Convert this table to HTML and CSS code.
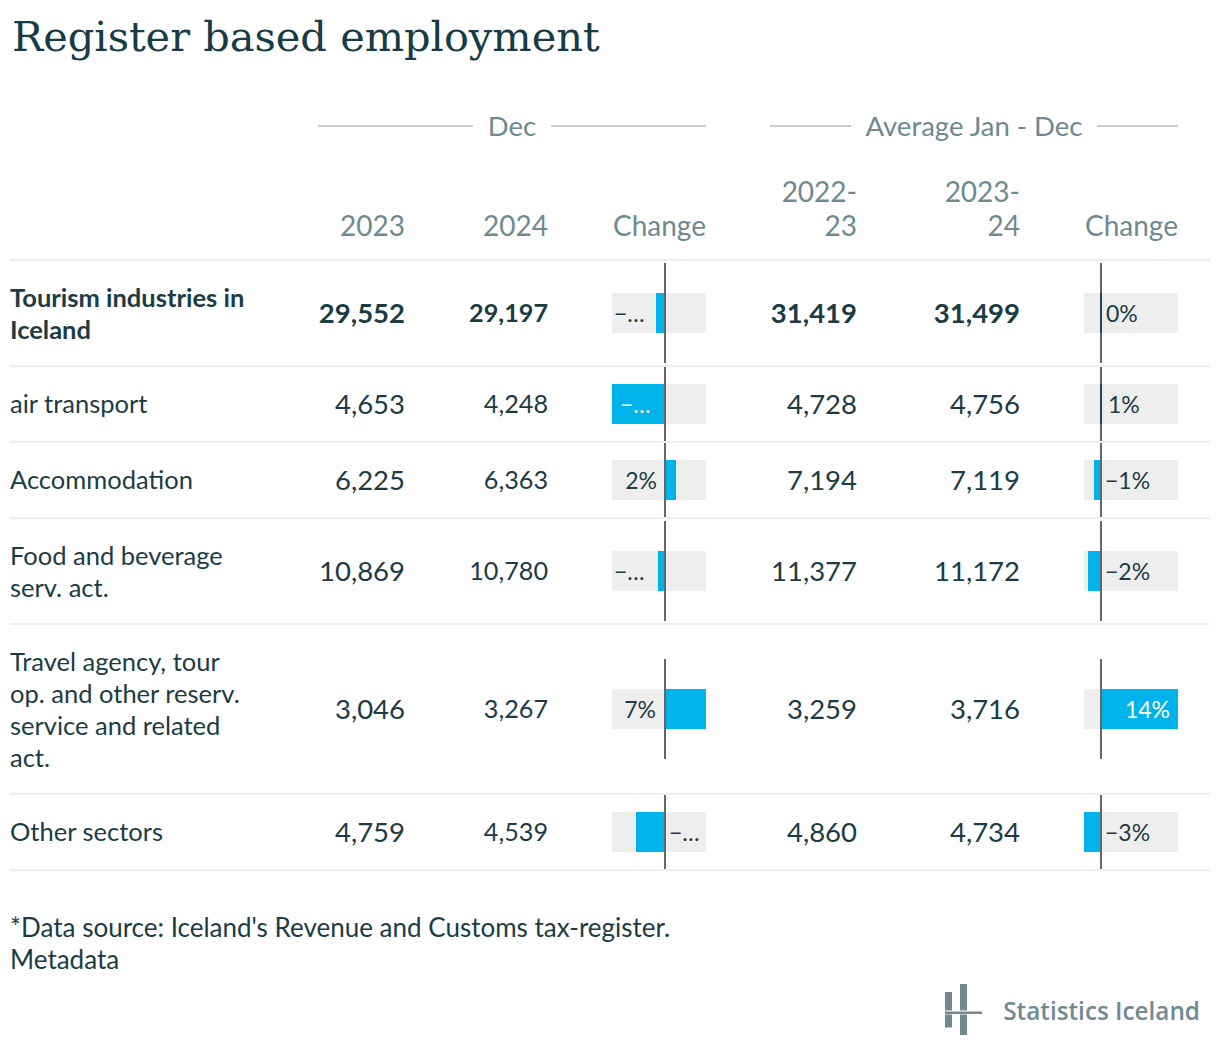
FILE: index.html
```html
<!DOCTYPE html>
<html lang="en">
<head>
<meta charset="utf-8">
<title>Register based employment</title>
<link rel="stylesheet" href="styles.css">
</head>
<body>
<div class="page">
  <h1 class="title">Register based employment</h1>

  <div class="table">
    <div class="groups">
      <div class="grp grp-dec"><span class="ln"></span><span class="gt">Dec</span><span class="ln"></span></div>
      <div class="grp grp-avg"><span class="ln"></span><span class="gt">Average Jan - Dec</span><span class="ln"></span></div>
    </div>

    <div class="row head">
      <div class="c name"></div>
      <div class="c num">2023</div>
      <div class="c num">2024</div>
      <div class="c num">Change</div>
      <div class="c num">2022-<br>23</div>
      <div class="c num">2023-<br>24</div>
      <div class="c num">Change</div>
    </div>

    <div class="row total">
      <div class="c name">Tourism industries in Iceland</div>
      <div class="c num">29,552</div>
      <div class="c num sm">29,197</div>
      <div class="c bar-cell"><div class="bar dec"><div class="track"></div><div class="fill" style="left:44px;width:8px"></div><div class="axis"></div><span class="lbl" style="left:2px">−…</span></div></div>
      <div class="c num">31,419</div>
      <div class="c num">31,499</div>
      <div class="c bar-cell"><div class="bar avg"><div class="track"></div><div class="axis"></div><div class="fill tiny" style="left:16px;width:2px"></div><span class="lbl" style="left:22px">0%</span></div></div>
    </div>

    <div class="row">
      <div class="c name">air transport</div>
      <div class="c num">4,653</div>
      <div class="c num sm">4,248</div>
      <div class="c bar-cell"><div class="bar dec"><div class="track"></div><div class="fill" style="left:0;width:52px"></div><div class="axis"></div><span class="lbl light" style="left:8px">−…</span></div></div>
      <div class="c num">4,728</div>
      <div class="c num">4,756</div>
      <div class="c bar-cell"><div class="bar avg"><div class="track"></div><div class="axis"></div><div class="fill tiny" style="left:16px;width:2px"></div><span class="lbl" style="left:24px">1%</span></div></div>
    </div>

    <div class="row">
      <div class="c name">Accommodation</div>
      <div class="c num">6,225</div>
      <div class="c num sm">6,363</div>
      <div class="c bar-cell"><div class="bar dec"><div class="track"></div><div class="fill" style="left:52px;width:12px"></div><div class="axis"></div><span class="lbl" style="right:49px">2%</span></div></div>
      <div class="c num">7,194</div>
      <div class="c num">7,119</div>
      <div class="c bar-cell"><div class="bar avg"><div class="track"></div><div class="fill" style="left:10px;width:6px"></div><div class="axis"></div><span class="lbl" style="left:21px">−1%</span></div></div>
    </div>

    <div class="row">
      <div class="c name">Food and beverage serv. act.</div>
      <div class="c num">10,869</div>
      <div class="c num sm">10,780</div>
      <div class="c bar-cell"><div class="bar dec"><div class="track"></div><div class="fill" style="left:46px;width:6px"></div><div class="axis"></div><span class="lbl" style="left:2px">−…</span></div></div>
      <div class="c num">11,377</div>
      <div class="c num">11,172</div>
      <div class="c bar-cell"><div class="bar avg"><div class="track"></div><div class="fill" style="left:4px;width:12px"></div><div class="axis"></div><span class="lbl" style="left:21px">−2%</span></div></div>
    </div>

    <div class="row">
      <div class="c name">Travel agency, tour op. and other reserv. service and related act.</div>
      <div class="c num">3,046</div>
      <div class="c num sm">3,267</div>
      <div class="c bar-cell"><div class="bar dec"><div class="track"></div><div class="fill" style="left:52px;width:42px"></div><div class="axis"></div><span class="lbl" style="right:50px">7%</span></div></div>
      <div class="c num">3,259</div>
      <div class="c num">3,716</div>
      <div class="c bar-cell"><div class="bar avg"><div class="track"></div><div class="fill" style="left:16px;width:78px"></div><div class="axis"></div><span class="lbl light" style="right:8px">14%</span></div></div>
    </div>

    <div class="row">
      <div class="c name">Other sectors</div>
      <div class="c num">4,759</div>
      <div class="c num sm">4,539</div>
      <div class="c bar-cell"><div class="bar dec"><div class="track"></div><div class="fill" style="left:24px;width:28px"></div><div class="axis"></div><span class="lbl" style="left:57px">−…</span></div></div>
      <div class="c num">4,860</div>
      <div class="c num">4,734</div>
      <div class="c bar-cell"><div class="bar avg"><div class="track"></div><div class="fill" style="left:0;width:16px"></div><div class="axis"></div><span class="lbl" style="left:21px">−3%</span></div></div>
    </div>
  </div>

  <div class="foot">
    <p>*Data source: Iceland's Revenue and Customs tax-register.</p>
    <p>Metadata</p>
  </div>

  <div class="brand">
    <svg class="logo" width="42" height="56" viewBox="0 0 42 56" aria-hidden="true">
      <rect x="2" y="10" width="7" height="18.5" fill="#74898f"/>
      <rect x="2" y="32.5" width="7" height="13" fill="#74898f"/>
      <rect x="17" y="2" width="7" height="26.5" fill="#74898f"/>
      <rect x="17" y="32.5" width="7" height="20.5" fill="#74898f"/>
      <rect x="2" y="29.5" width="37" height="2.5" fill="#74898f"/>
    </svg>
    <span class="brand-name">Statistics Iceland</span>
  </div>
</div>
</body>
</html>
```

FILE: styles.css
```css
* { box-sizing: border-box; }

body {
  margin: 0;
  background: #ffffff;
  color: #1b3c45;
  font-family: Lato, "Noto Sans", sans-serif;
}

.page {
  width: 1220px;
  padding: 0 10px;
}

.title {
  margin: 11px 0 0 2px;
  font-family: "DejaVu Serif", serif;
  font-weight: normal;
  font-size: 41.5px;
  line-height: 52px;
  color: #173c46;
}

.table {
  width: 1200px;
}

.groups,
.row {
  display: grid;
  grid-template-columns: 252px 143px 143px 158px 151px 163px 158px 32px;
}

.groups {
  margin-top: 46px;
  font-size: 27.5px;
  line-height: 34px;
  color: #6d8a91;
}

.grp {
  display: flex;
  align-items: center;
  gap: 15px;
}

.grp-dec { grid-column: 2 / 5; margin-left: 56px; }
.grp-avg { grid-column: 5 / 8; margin-left: 64px; }

.grp .ln {
  flex: 1 1 auto;
  height: 2px;
  background: #cccccc;
}

.grp .gt { flex: none; }

.row {
  border-bottom: 2px solid #eeeeee;
}

.row.head {
  padding-top: 31px;
  padding-bottom: 17px;
  font-size: 28px;
  line-height: 34px;
  color: #6d8a91;
}

.row.head .c { align-self: end; }

.c.name {
  padding: 20px 6px 20px 0;
  font-size: 25.5px;
  line-height: 32px;
}

.head .c.name { padding: 0; }

.c.num {
  align-self: center;
  padding: 20px 0;
  text-align: right;
  font-size: 27.5px;
  line-height: 34px;
}

.head .c.num { padding: 0; font-size: 28px; }

.c.num.sm { font-size: 25.2px; line-height: 32px; padding-bottom: 22px; }

.total .c.name,
.total .c.num {
  font-weight: 700;
}

.bar-cell {
  display: flex;
  flex-direction: column;
  justify-content: center;
  align-items: flex-end;
}

.bar {
  position: relative;
  width: 94px;
  flex: 1 1 auto;
  max-height: 100px;
}

.track,
.fill {
  position: absolute;
  top: 50%;
  height: 40px;
  margin-top: -20px;
}

.track {
  left: 0;
  right: 0;
  background: #eeeeee;
}

.fill { background: #00b4eb; }
.fill.tiny { background: #15485a; }

.axis {
  position: absolute;
  top: 0;
  bottom: 0;
  width: 2px;
  background: #666666;
}

.bar.dec .axis { left: 52px; }
.bar.avg .axis { left: 16px; }

.lbl {
  position: absolute;
  top: 50%;
  transform: translateY(-50%);
  font-size: 23px;
  line-height: 26px;
  font-weight: 400;
  color: #1b3c45;
  white-space: nowrap;
}

.lbl.light { color: #ffffff; }

.foot {
  margin-top: 40px;
  font-size: 26px;
  line-height: 32px;
}

.foot p { margin: 0; }

.brand {
  margin-top: 7px;
  padding-right: 10px;
  display: flex;
  justify-content: flex-end;
  align-items: center;
  gap: 18px;
}

.logo { display: block; flex: none; }

.brand-name {
  font-family: "Open Sans", sans-serif;
  font-weight: 600;
  font-size: 24.3px;
  color: #6f8a90;
}
```
